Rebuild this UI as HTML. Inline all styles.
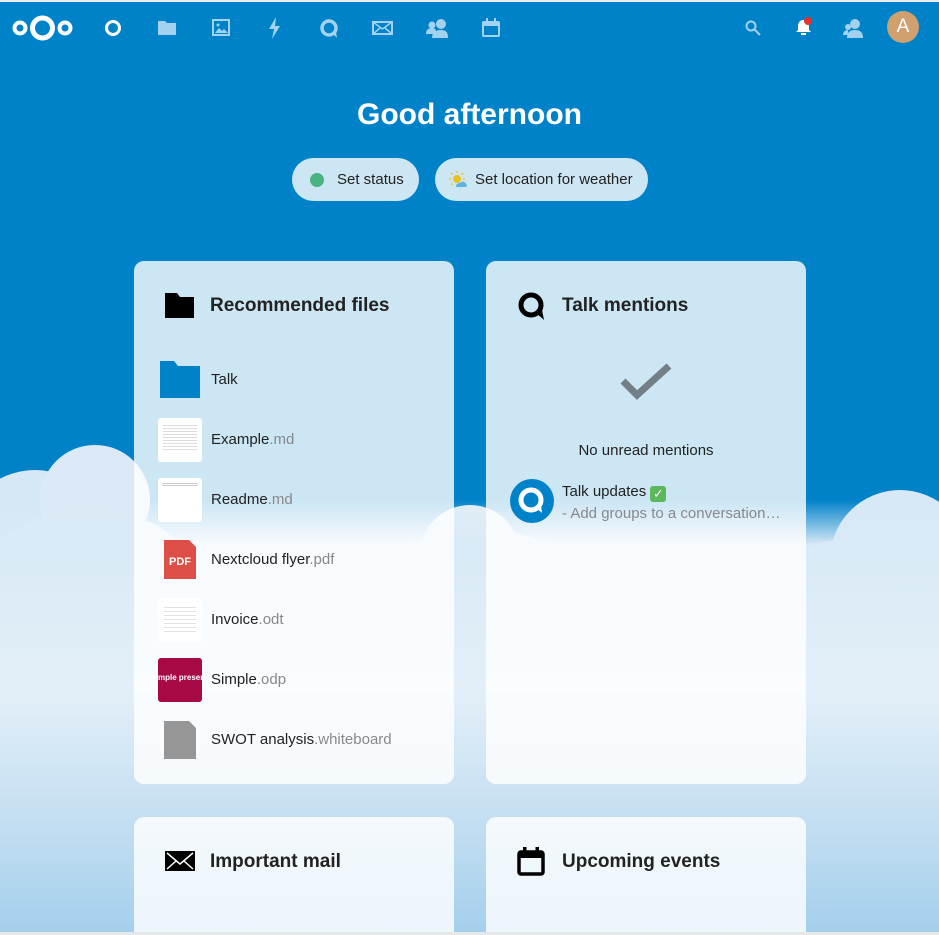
<!DOCTYPE html>
<html><head><meta charset="utf-8"><style>
*{box-sizing:border-box;margin:0;padding:0}
html,body{width:939px;height:935px;overflow:hidden}
body{font-family:"Liberation Sans",sans-serif;position:relative;background:#0082c9}
.clouds{position:absolute;left:0;top:0;width:939px;height:935px;overflow:hidden}
.cl{position:absolute;border-radius:50%}
.base{position:absolute;left:0;top:500px;width:939px;height:435px;background:linear-gradient(to bottom,rgba(214,232,245,0) 0,#d9eaf6 45px,#e3eff8 190px,#c6e0f2 310px,#a3cfec 435px)}
.topline{position:absolute;top:0;left:0;width:939px;height:2px;background:#e8eef2}
.hdr{position:absolute;top:2px;left:0;width:939px;height:50px}
.ic{position:absolute;top:15px}
h1{position:absolute;top:98px;left:0;width:939px;text-align:center;color:#fff;font-size:30px;font-weight:bold}
.pill{position:absolute;top:158px;height:43px;border-radius:22px;background:#cde6f3;color:#222;font-size:15px;line-height:43px}
.card{position:absolute;width:320px;border-radius:10px;background:rgba(255,255,255,0.8)}
.ct{position:absolute;left:76px;top:34px;font-size:19px;font-weight:bold;color:#222}
.row{position:absolute;left:24px;height:44px;width:290px}
.row .t{position:absolute;left:53px;top:13px;font-size:15px;color:#222;white-space:nowrap}
.row .t span{color:#888}
.th{position:absolute;left:0;top:0;width:44px;height:44px;border-radius:3px}
</style></head><body>
<div class="clouds">
<div class="cl" style="left:-40px;top:470px;width:150px;height:150px;background:#d6e8f5"></div>
<div class="cl" style="left:40px;top:445px;width:110px;height:110px;background:#dbeaf6"></div>
<div class="cl" style="left:-10px;top:510px;width:200px;height:120px;background:#dcebf6"></div>
<div class="cl" style="left:420px;top:505px;width:100px;height:100px;background:#e2eef7"></div>
<div class="cl" style="left:380px;top:530px;width:200px;height:100px;background:#e2eef7"></div>
<div class="cl" style="left:830px;top:490px;width:140px;height:140px;background:#d8e9f5"></div>
<div class="cl" style="left:780px;top:540px;width:120px;height:100px;background:#d8e9f5"></div>
<div class="base"></div>
</div>
<div class="topline"></div>
<div class="hdr">
<svg class="ic" style="left:12px;top:12px" width="62" height="28" viewBox="0 0 62 28"><circle cx="30.5" cy="14" r="10" fill="none" stroke="#fff" stroke-width="5"/><circle cx="8" cy="14" r="5.5" fill="none" stroke="#fff" stroke-width="4"/><circle cx="53" cy="14" r="5.5" fill="none" stroke="#fff" stroke-width="4"/></svg>
<svg class="ic" style="left:104px;top:17px" width="18" height="18"><circle cx="9" cy="9" r="6.5" fill="none" stroke="#fff" stroke-width="3"/></svg>
<svg class="ic" style="left:158px;top:18px" width="18" height="16"><path d="M0 1h7l2 2h9v12H0z" fill="#a3d2ef"/></svg>
<svg class="ic" style="left:212px;top:17px" width="18" height="17"><rect x="1" y="1" width="16" height="15" fill="none" stroke="#a3d2ef" stroke-width="2"/><path d="M3 14l4-5 3 3 2-2 4 4z" fill="#a3d2ef"/><circle cx="6" cy="6" r="1.5" fill="#a3d2ef"/></svg>
<svg class="ic" style="left:268px;top:15px" width="14" height="22"><path d="M8 0L1 12h5l-2 10 8-13H7z" fill="#a3d2ef"/></svg>
<svg class="ic" style="left:319px;top:16px" width="20" height="21"><circle cx="10" cy="10" r="7" fill="none" stroke="#a3d2ef" stroke-width="3.5"/><path d="M13 15l5 5-1-6z" fill="#a3d2ef"/></svg>
<svg class="ic" style="left:372px;top:19px" width="21" height="14"><rect x="1" y="1" width="19" height="12" fill="none" stroke="#a3d2ef" stroke-width="2"/><path d="M1 1l9.5 7L20 1M1 13l7-6M20 13l-7-6" fill="none" stroke="#a3d2ef" stroke-width="1.5"/></svg>
<svg class="ic" style="left:426px;top:16px" width="22" height="20"><circle cx="15" cy="6" r="5" fill="#a3d2ef"/><path d="M6 20c0-6 4-8 9-8s7 2 7 8z" fill="#a3d2ef"/><circle cx="6" cy="7" r="3.5" fill="#a3d2ef"/><path d="M0 16c0-4 2-6 6-6s4 2 4 6z" fill="#a3d2ef"/></svg>
<svg class="ic" style="left:482px;top:16px" width="18" height="20"><rect x="1" y="4" width="16" height="14" rx="1" fill="none" stroke="#a3d2ef" stroke-width="2"/><rect x="1" y="4" width="16" height="4" fill="#a3d2ef"/><rect x="4" y="0" width="2" height="6" fill="#a3d2ef"/><rect x="12" y="0" width="2" height="6" fill="#a3d2ef"/></svg>
<svg class="ic" style="left:745px;top:18px" width="16" height="16"><circle cx="6" cy="6" r="4.5" fill="none" stroke="#a3d2ef" stroke-width="2"/><path d="M9 9l6 6" stroke="#a3d2ef" stroke-width="2"/></svg>
<svg class="ic" style="left:795px;top:14px" width="18" height="20"><path d="M8 4c-3 0-5 3-5 6v4l-2 2h15l-2-2v-4c0-3-2-6-6-6z" fill="#fff"/><rect x="6" y="17" width="5" height="2" fill="#fff"/><circle cx="13" cy="5" r="4" fill="#e9322d"/></svg>
<svg class="ic" style="left:843px;top:16px" width="20" height="20"><circle cx="12" cy="6" r="5" fill="#a3d2ef"/><path d="M4 20c0-6 3-8 8-8s8 2 8 8z" fill="#a3d2ef"/><circle cx="5" cy="9" r="3" fill="#a3d2ef"/><path d="M0 17c0-3 2-5 5-5v5z" fill="#a3d2ef"/></svg>
<div style="position:absolute;left:887px;top:9px;width:32px;height:32px;border-radius:50%;background:#d1a06f;color:#fff;font-size:19px;text-align:center;line-height:32px">A</div>
</div>
<h1>Good afternoon</h1>
<div class="pill" style="left:292px;width:127px"><span style="position:absolute;left:18px;top:15px;width:14px;height:14px;border-radius:50%;background:#49b382"></span><span style="position:absolute;left:45px">Set status</span></div>
<div class="pill" style="left:435px;width:213px"><svg style="position:absolute;left:14px;top:13px" width="18" height="17"><circle cx="8" cy="8" r="4" fill="#e9c21b"/><g stroke="#e9c21b" stroke-width="1.3"><path d="M8 0v2M8 14v2M0 8h2M14 8h2M2 2l1.5 1.5M12.5 12.5l1.5 1.5M2 14l1.5-1.5M12.5 3.5l1.5-1.5"/></g><path d="M7 16c0-3 2-4 4-4 1-2 5-2 6 1 1 0 1 3 0 3z" fill="#60b2df"/></svg><span style="position:absolute;left:40px">Set location for weather</span></div>

<div class="card" style="left:134px;top:261px;height:523px">
<svg style="position:absolute;left:31px;top:32px" width="29" height="25"><path d="M0 0h12l3 4h14v21H0z" fill="#000"/></svg>
<div class="ct">Recommended files</div>
<div class="row" style="top:97px"><svg class="th" viewBox="0 0 44 44"><path d="M2 3h14l4 5h22v32H2z" fill="#0082c9"/></svg><div class="t">Talk</div></div>
<div class="row" style="top:157px"><div class="th" style="background:#fff"><div style="margin:5px;height:28px;background:repeating-linear-gradient(#fff 0 2px,#ddd 2px 3px)"></div></div><div class="t">Example<span>.md</span></div></div>
<div class="row" style="top:217px"><div class="th" style="background:#fff"><div style="margin:4px;height:4px;background:repeating-linear-gradient(#fff 0 1px,#ccc 1px 2px)"></div></div><div class="t">Readme<span>.md</span></div></div>
<div class="row" style="top:277px"><svg class="th" viewBox="0 0 44 44"><path d="M6 2h25l7 7v32H6z" fill="#dd4f46"/><text x="22" y="27" font-size="11" font-weight="bold" fill="#fff" text-anchor="middle" font-family="Liberation Sans">PDF</text></svg><div class="t">Nextcloud flyer<span>.pdf</span></div></div>
<div class="row" style="top:337px"><div class="th" style="background:#fff"><div style="margin:6px;height:30px;background:repeating-linear-gradient(#fff 0 3px,#e2e2e2 3px 4px)"></div></div><div class="t">Invoice<span>.odt</span></div></div>
<div class="row" style="top:397px"><div class="th" style="background:#a80a46;color:#fff;font-size:8px;font-weight:bold;line-height:40px;overflow:hidden;white-space:nowrap;text-align:center">mple presentati</div><div class="t">Simple<span>.odp</span></div></div>
<div class="row" style="top:457px"><svg class="th" viewBox="0 0 44 44"><path d="M6 3h25l7 7v31H6z" fill="#969696"/></svg><div class="t">SWOT analysis<span>.whiteboard</span></div></div>
</div>

<div class="card" style="left:486px;top:261px;height:523px">
<svg style="position:absolute;left:31px;top:31px" width="30" height="29"><circle cx="14" cy="13" r="10" fill="none" stroke="#000" stroke-width="5"/><path d="M18 20l9 8-2-10z" fill="#000"/></svg>
<div class="ct">Talk mentions</div>
<svg style="position:absolute;left:134px;top:102px" width="52" height="38"><path d="M3 18l14 14L49 3" fill="none" stroke="#727f86" stroke-width="7"/></svg>
<div style="position:absolute;left:0;width:320px;top:181px;text-align:center;font-size:15px;color:#222">No unread mentions</div>
<svg style="position:absolute;left:24px;top:218px" width="44" height="44"><circle cx="22" cy="22" r="22" fill="#0082c9"/><circle cx="21" cy="21" r="10" fill="none" stroke="#fff" stroke-width="5"/><path d="M25 28l7 6-1-8z" fill="#fff"/></svg>
<div style="position:absolute;left:76px;top:222px;font-size:15px;color:#222">Talk updates <span style="display:inline-block;width:16px;height:16px;background:#5bb85c;border-radius:3px;color:#fff;font-size:13px;text-align:center;line-height:16px;vertical-align:-2px">✓</span></div>
<div style="position:absolute;left:76px;top:244px;font-size:15px;color:#888;white-space:nowrap">- Add groups to a conversation…</div>
</div>

<div class="card" style="left:134px;top:817px;height:115px;border-radius:10px 10px 0 0">
<svg style="position:absolute;left:31px;top:34px" width="30" height="20"><rect width="30" height="20" fill="#000"/><path d="M2 2l13 11L28 2M2 18l9-8M28 18l-9-8" fill="none" stroke="#fff" stroke-width="1.5"/></svg>
<div class="ct">Important mail</div>
</div>
<div class="card" style="left:486px;top:817px;height:115px;border-radius:10px 10px 0 0">
<svg style="position:absolute;left:31px;top:29px" width="28" height="30"><rect x="2" y="6" width="24" height="22" rx="2" fill="none" stroke="#000" stroke-width="3.5"/><rect x="2" y="6" width="24" height="6" fill="#000"/><rect x="6" y="1" width="3.5" height="8" fill="#000"/><rect x="18.5" y="1" width="3.5" height="8" fill="#000"/></svg>
<div class="ct">Upcoming events</div>
</div>
<div style="position:absolute;left:0;top:932px;width:939px;height:3px;background:#e4e8eb"></div>
</body></html>
